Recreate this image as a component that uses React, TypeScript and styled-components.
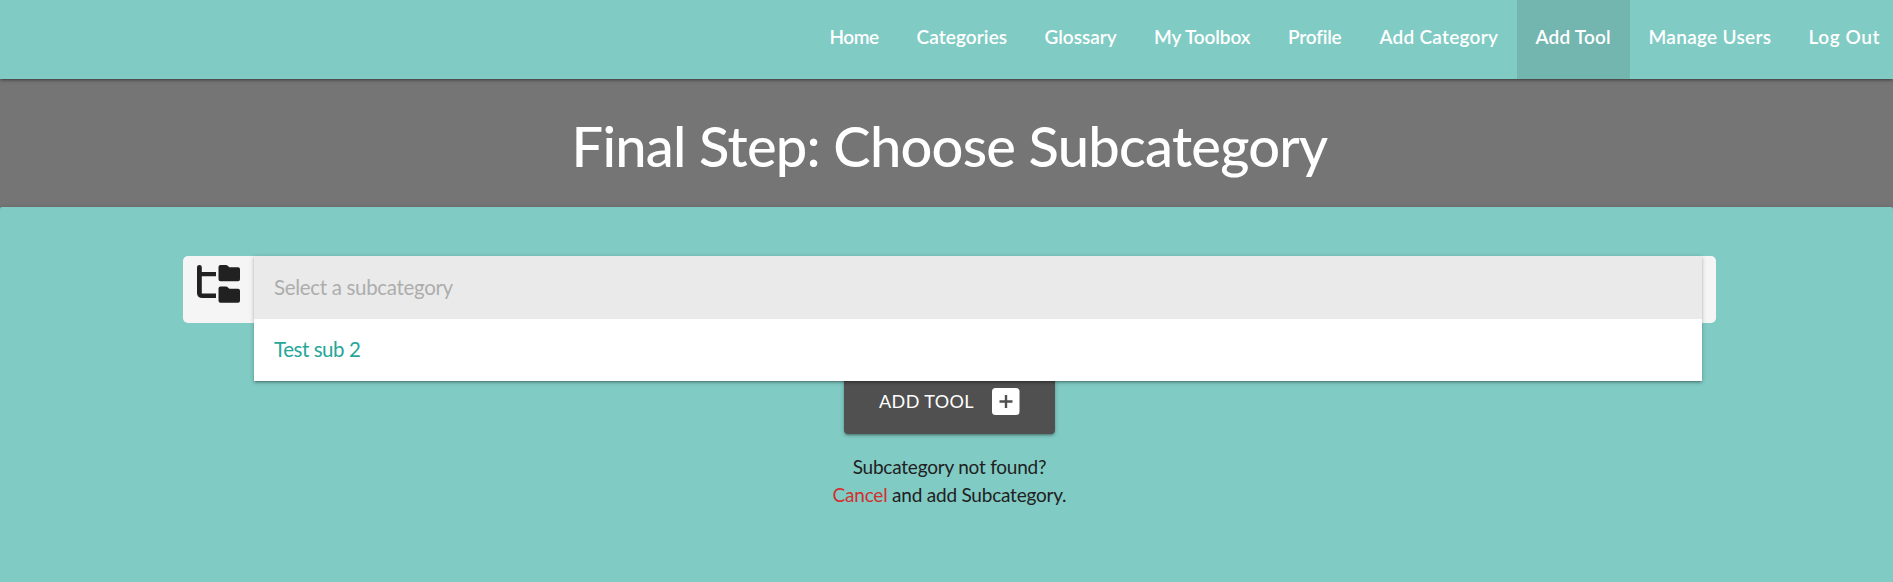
import React from "react";
import styled, { createGlobalStyle, css } from "styled-components";

const GlobalStyle = createGlobalStyle`
  *, *::before, *::after { box-sizing: border-box; }
  html, body { margin: 0; height: 100%; }
  body {
    background: #757575;
    color: #212121;
    font-family: Lato, "Open Sans", sans-serif;
    overflow: hidden;
  }
`;

const raised = css`
  box-shadow: 0 2px 2px 0 rgba(0, 0, 0, 0.14), 0 3px 1px -2px rgba(0, 0, 0, 0.12),
    0 1px 5px 0 rgba(0, 0, 0, 0.2);
`;

const Page = styled.div`
  display: flex;
  flex-direction: column;
  height: 582px;
`;

const NavShell = styled.header`
  flex: none;
  height: 79px;
  ${raised}
`;

const Nav = styled.nav`
  display: flex;
  height: 79px;
  padding-left: 811px;
  overflow: hidden;
  background: #80cbc4;
`;

const NavLink = styled.a<{ $width: number; $tracking: number; $active?: boolean }>`
  flex: none;
  width: ${(p) => p.$width}px;
  padding-left: 18.5px;
  font-size: 19px;
  font-weight: 600;
  line-height: 73px;
  letter-spacing: ${(p) => p.$tracking}px;
  white-space: nowrap;
  color: #fff;
  background: ${(p) => (p.$active ? "rgba(0, 0, 0, 0.1)" : "transparent")};
`;

const Title = styled.h1`
  flex: none;
  height: 128px;
  margin: 0;
  padding-left: 6px;
  font-size: 56px;
  font-weight: 500;
  line-height: 134px;
  letter-spacing: -0.75px;
  text-align: center;
  color: #fff;
`;

const Panel = styled.main`
  display: flex;
  flex: 1;
  flex-direction: column;
  align-items: center;
  padding: 49px 0 0 6px;
  border-radius: 2px 2px 0 0;
  background: #80cbc4;
  ${raised}
`;

const Field = styled.div`
  position: relative;
  width: 1533px;
  height: 67px;
  padding: 9px 0 0 14px;
  border-radius: 5px;
  background: #f5f5f5;
`;

const Menu = styled.ul`
  position: absolute;
  top: 0;
  left: 71px;
  z-index: 1;
  width: 1448px;
  margin: 0;
  padding: 0;
  list-style: none;
  background: #fff;
  ${raised}
`;

const Option = styled.li<{ $disabled?: boolean }>`
  height: ${(p) => (p.$disabled ? 63 : 62)}px;
  padding-left: 20px;
  font-size: 20.5px;
  line-height: ${(p) => (p.$disabled ? 63 : 61)}px;
  letter-spacing: ${(p) => (p.$disabled ? -0.32 : -0.45)}px;
  color: ${(p) => (p.$disabled ? "#adadad" : "#26a69a")};
  background: ${(p) => (p.$disabled ? "#eaeaea" : "#fff")};
`;

const SubmitButton = styled.button`
  display: flex;
  align-items: center;
  gap: 18px;
  width: 211px;
  height: 66px;
  margin-top: 45px;
  padding: 0 0 0 35px;
  border: 0;
  border-radius: 4px;
  font-family: inherit;
  font-size: 18px;
  letter-spacing: 0.4px;
  color: #fff;
  background: #505050;
  ${raised}
`;

const Hint = styled.p`
  margin: 19px 0 0;
  font-size: 19px;
  line-height: 28px;
  letter-spacing: -0.22px;
  text-align: center;
  color: #212121;
`;

const CancelLink = styled.a`
  color: #d32f2f;
`;

const links = [
  { label: "Home", width: 87, tracking: -0.5 },
  { label: "Categories", width: 128, tracking: 0.1 },
  { label: "Glossary", width: 109.5, tracking: 0 },
  { label: "My Toolbox", width: 134, tracking: -0.1 },
  { label: "Profile", width: 91.5, tracking: -0.2 },
  { label: "Add Category", width: 156, tracking: 0.25 },
  { label: "Add Tool", width: 113, tracking: 0.2, active: true },
  { label: "Manage Users", width: 160, tracking: 0.3 },
  { label: "Log Out", width: 108, tracking: 0.6 },
];

const FolderTree = () => (
  <svg width="43" height="38" viewBox="0 0 43 38" fill="#212121">
    <path d="M2.4 0Q4.8 0 4.8 2.2V7H19V11.2H4.8V28.4H19V33H5.5Q0 33 0 28V2.2Q0 0 2.4 0Z" />
    <path
      id="folder"
      d="M23.5 0H29Q30 0 30.7 .7L32.3 2.2H41Q43 2.2 43 4.2V14.3Q43 16.3 41 16.3H23.5Q21.5 16.3 21.5 14.3V2Q21.5 0 23.5 0Z"
    />
    <use href="#folder" y="21.5" />
  </svg>
);

const PlusSquare = () => (
  <svg width="28" height="27" viewBox="0 0 28 27">
    <rect width="27.5" height="27" rx="3.5" fill="#fff" />
    <path d="M7.5 13.5H20.5M14 7V20" stroke="#505050" strokeWidth="2.4" />
  </svg>
);

export default function App() {
  return (
    <Page>
      <GlobalStyle />
      <NavShell>
        <Nav>
          {links.map((link) => (
            <NavLink key={link.label} $width={link.width} $tracking={link.tracking} $active={link.active}>
              {link.label}
            </NavLink>
          ))}
        </Nav>
      </NavShell>
      <Title>Final Step: Choose Subcategory</Title>
      <Panel>
        <Field>
          <FolderTree />
          <Menu>
            <Option $disabled>Select a subcategory</Option>
            <Option>Test sub 2</Option>
          </Menu>
        </Field>
        <SubmitButton>
          ADD TOOL
          <PlusSquare />
        </SubmitButton>
        <Hint>
          Subcategory not found?
          <br />
          <CancelLink>Cancel</CancelLink> and add Subcategory.
        </Hint>
      </Panel>
    </Page>
  );
}
